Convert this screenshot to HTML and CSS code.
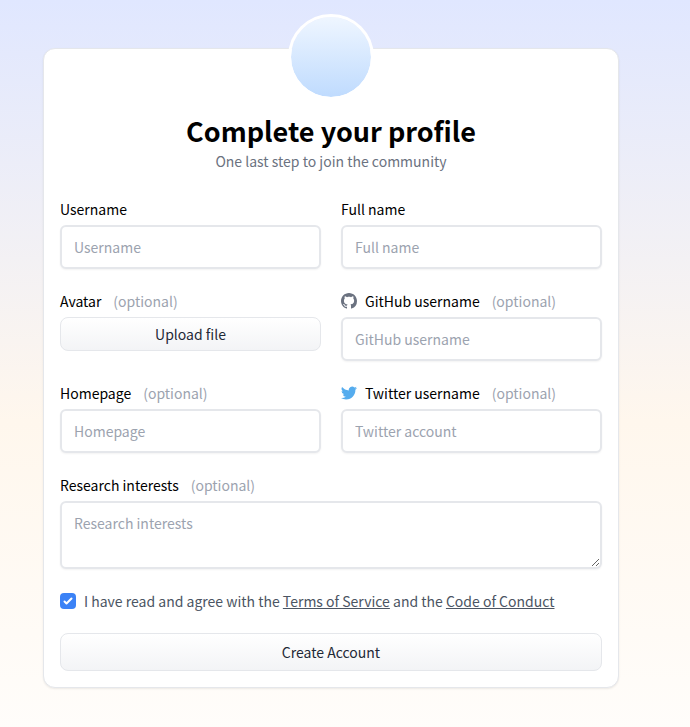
FILE: index.html
```html
<!DOCTYPE html>
<html lang="en">
<head>
<meta charset="utf-8">
<meta name="viewport" content="width=device-width, initial-scale=1">
<title>Complete your profile</title>
<link rel="stylesheet" href="styles.css">
</head>
<body>
<main class="page">
  <form class="card">
    <div class="avatar"></div>
    <header class="intro">
      <h1>Complete your profile</h1>
      <p>One last step to join the community</p>
    </header>
    <div class="fields">
      <div class="field">
        <label for="username">Username</label>
        <input class="box" id="username" type="text" placeholder="Username">
      </div>
      <div class="field">
        <label for="fullname">Full name</label>
        <input class="box" id="fullname" type="text" placeholder="Full name">
      </div>
      <div class="field">
        <label for="avatar">Avatar <span class="optional">(optional)</span></label>
        <button class="btn btn-small" id="avatar" type="button">Upload file</button>
      </div>
      <div class="field">
        <label for="github">
          <svg class="icon github" viewBox="0 0 16 16" aria-hidden="true"><path fill="currentColor" fill-rule="evenodd" d="M8 0C3.58 0 0 3.58 0 8c0 3.54 2.29 6.53 5.47 7.59.4.07.55-.17.55-.38 0-.19-.01-.82-.01-1.49-2.01.37-2.53-.49-2.69-.94-.09-.23-.48-.94-.82-1.13-.28-.15-.68-.52-.01-.53.63-.01 1.08.58 1.23.82.72 1.21 1.87.87 2.33.66.07-.52.28-.87.51-1.07-1.78-.2-3.64-.89-3.64-3.95 0-.87.31-1.59.82-2.15-.08-.2-.36-1.02.08-2.12 0 0 .67-.21 2.2.82.64-.18 1.32-.27 2-.27s1.36.09 2 .27c1.53-1.04 2.2-.82 2.2-.82.44 1.1.16 1.92.08 2.12.51.56.82 1.27.82 2.15 0 3.07-1.87 3.75-3.65 3.95.29.25.54.73.54 1.48 0 1.07-.01 1.93-.01 2.2 0 .21.15.46.55.38A8.01 8.01 0 0 0 16 8c0-4.42-3.58-8-8-8z"/></svg>
          GitHub username <span class="optional">(optional)</span></label>
        <input class="box" id="github" type="text" placeholder="GitHub username">
      </div>
      <div class="field">
        <label for="homepage">Homepage <span class="optional">(optional)</span></label>
        <input class="box" id="homepage" type="text" placeholder="Homepage">
      </div>
      <div class="field">
        <label for="twitter">
          <svg class="icon twitter" viewBox="0 0 24 24" aria-hidden="true"><path fill="currentColor" d="M23.95 4.57a10 10 0 0 1-2.82.77 4.96 4.96 0 0 0 2.16-2.72c-.95.55-2 .95-3.12 1.18a4.92 4.92 0 0 0-8.39 4.48C7.69 8.1 4.07 6.13 1.64 3.16a4.92 4.92 0 0 0 1.52 6.57 4.9 4.9 0 0 1-2.23-.61v.06a4.92 4.92 0 0 0 3.95 4.83 5 5 0 0 1-2.21.08 4.94 4.94 0 0 0 4.6 3.42A9.87 9.87 0 0 1 0 19.54a13.99 13.99 0 0 0 7.56 2.21c9.05 0 14-7.5 14-13.98 0-.21 0-.42-.02-.63a9.94 9.94 0 0 0 2.41-2.57z"/></svg>
          Twitter username <span class="optional">(optional)</span></label>
        <input class="box" id="twitter" type="text" placeholder="Twitter account">
      </div>
      <div class="field wide">
        <label for="interests">Research interests <span class="optional">(optional)</span></label>
        <textarea class="box" id="interests" rows="2" placeholder="Research interests"></textarea>
      </div>
      <div class="agree wide">
        <input type="checkbox" id="agree" checked>
        <label for="agree">I have read and agree with the <a href="#terms">Terms of Service</a> and the <a href="#conduct">Code of Conduct</a></label>
      </div>
      <button class="btn wide" type="submit">Create Account</button>
    </div>
  </form>
</main>
</body>
</html>
```
FILE: styles.css
```css
*,
*::before,
*::after {
  box-sizing: border-box;
}

body {
  margin: 0;
  font-family: "Source Sans Pro", "Noto Sans CJK SC", sans-serif;
  font-size: 14px;
  line-height: 24px;
  color: #000;
}

.page {
  display: flex;
  justify-content: center;
  align-items: flex-start;
  min-height: 100vh;
  padding: 48px 43px 32px 15px;
  background: linear-gradient(#e0e7ff, #fff7ed 58%, #fff 116%);
}

.card {
  display: flex;
  flex-direction: column;
  align-items: center;
  width: 100%;
  max-width: 576px;
  padding: 0 16px 16px;
  border: 1px solid #e5e7eb;
  border-radius: 12px;
  background: #fff;
  box-shadow: 0 1px 2px rgba(0, 0, 0, 0.08);
}

.avatar {
  width: 86px;
  height: 86px;
  margin-top: -35px;
  border: 3px solid #fff;
  border-radius: 50%;
  background: linear-gradient(#eff6ff, #bfdbfe) padding-box;
}

.intro {
  margin: 13px 0 24px;
  text-align: center;
}

.intro h1 {
  margin: 0;
  font-size: 27px;
  line-height: 36px;
  font-weight: 700;
}

.intro p {
  margin: 0;
  color: #6b7280;
}

.fields {
  display: grid;
  grid-template-columns: 1fr 1fr;
  gap: 20px;
  align-items: start;
  width: 100%;
}

.wide {
  grid-column: 1 / -1;
}

.field {
  display: flex;
  flex-direction: column;
  gap: 4px;
}

.field label {
  display: flex;
  align-items: center;
}

.optional {
  margin-left: 12px;
  color: #9ca3af;
}

.icon {
  width: 16px;
  height: 16px;
  margin-right: 8px;
}

.github {
  color: #6b7280;
}

.twitter {
  color: #55acee;
}

.box {
  display: block;
  width: 100%;
  margin: 0;
  padding: 8px 12px;
  border: 2px solid #e5e7eb;
  border-radius: 6px;
  background: #fff;
  box-shadow: 0 1px 2px rgba(0, 0, 0, 0.05);
  font: inherit;
  color: inherit;
}

input.box {
  height: 44px;
}

textarea.box {
  resize: vertical;
}

.box::placeholder {
  color: #9ca3af;
  opacity: 1;
}

.btn {
  padding: 6px 16px;
  border: 1px solid #e5e7eb;
  border-radius: 8px;
  background: linear-gradient(#fff, #f3f4f6);
  font: inherit;
  color: #1f2937;
}

.btn-small {
  padding: 4px 12px;
}

.agree {
  display: flex;
  align-items: center;
  gap: 8px;
  color: #4b5563;
}

.agree input {
  appearance: none;
  flex: none;
  width: 16px;
  height: 16px;
  margin: 0;
  border-radius: 4px;
  background: #3b82f6 url("data:image/svg+xml,%3Csvg viewBox='0 0 16 16' fill='white' xmlns='http://www.w3.org/2000/svg'%3E%3Cpath d='M12.207 4.793a1 1 0 0 1 0 1.414l-5 5a1 1 0 0 1-1.414 0l-2-2a1 1 0 0 1 1.414-1.414L6.5 9.086l4.293-4.293a1 1 0 0 1 1.414 0z'/%3E%3C/svg%3E") center / 16px no-repeat;
}

.agree a {
  color: inherit;
}

@media (max-width: 480px) {
  .fields {
    grid-template-columns: 1fr;
  }
}
```
